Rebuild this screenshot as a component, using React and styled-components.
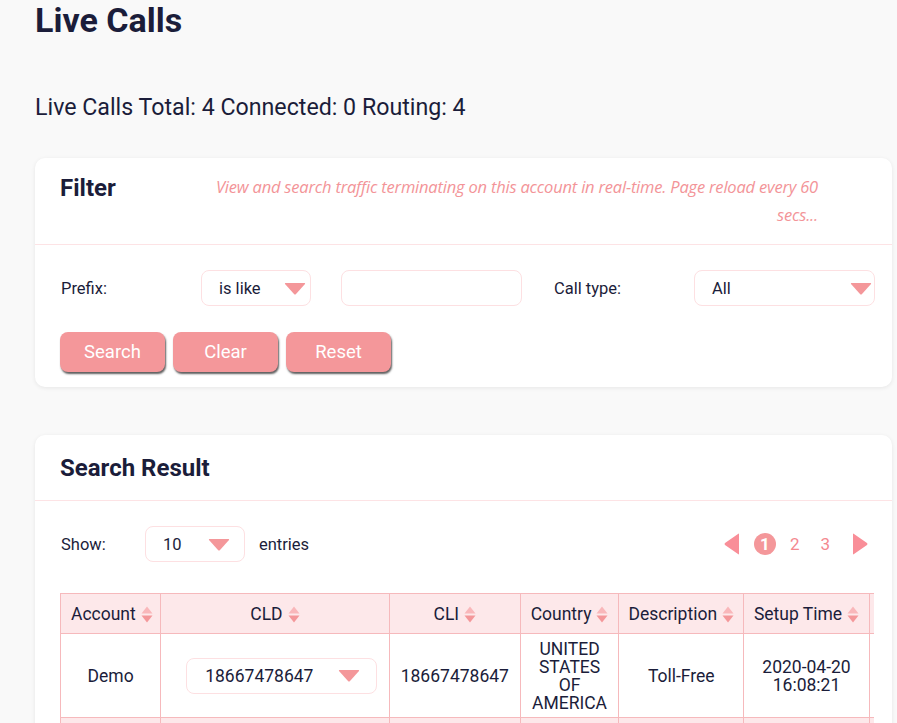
import React from "react";
import styled, { createGlobalStyle } from "styled-components";

const GlobalStyle = createGlobalStyle`
  html, body {
    margin: 0;
    padding: 0;
    background: #f9f9f9;
    font-family: Roboto, "Noto Sans", sans-serif;
    color: #1b1d3a;
    overflow: hidden;
  }
`;

const pink = "#f4979a";
const pinkLight = "#fde0e2";

const Arrow = ({ w = 22, h = 13 }) => (
  <svg width={w} height={h} viewBox="0 0 22 13">
    <path d="M1.5 1 L20.5 1 Q21.5 1 21 2 L12 12 Q11 13 10 12 L1 2 Q0.5 1 1.5 1 Z" fill={pink} />
  </svg>
);

const SortIcon = () => (
  <svg width="12" height="17" viewBox="0 0 12 17">
    <path d="M6 0.5 L11.5 7.5 L0.5 7.5 Z" fill="#f9b7ba" />
    <path d="M6 16.5 L11.5 9.5 L0.5 9.5 Z" fill={pink} />
  </svg>
);

const PageArrow = ({ dir }) => (
  <svg width="16" height="22" viewBox="0 0 16 22">
    {dir === "left" ? (
      <path d="M15 1.5 L15 20.5 Q15 22 14 21 L1 12 Q0 11 1 10 L14 1 Q15 0 15 1.5 Z" fill="#f98e98" />
    ) : (
      <path d="M1 1.5 L1 20.5 Q1 22 2 21 L15 12 Q16 11 15 10 L2 1 Q1 0 1 1.5 Z" fill="#f98e98" />
    )}
  </svg>
);

const Page = styled.div`
  padding: 0 5px 0 35px;
`;

const Title = styled.h1`
  margin: 0;
  padding-top: 1px;
  font-size: 34px;
  font-weight: 700;
  line-height: 38px;
`;

const Stats = styled.div`
  margin-top: 55px;
  font-size: 23.2px;
  line-height: 26px;
`;

const Card = styled.section`
  margin-top: ${(p) => p.$top}px;
  background: #fff;
  border-radius: 10px;
  box-shadow: 0 1px 4px rgba(0, 0, 0, 0.08);
  overflow: hidden;
`;

const CardHeader = styled.div`
  display: flex;
  align-items: flex-start;
  justify-content: space-between;
  padding: ${(p) => p.$pad};
  border-bottom: 1px solid #fde3e5;
`;

const CardTitle = styled.h2`
  margin: 0;
  font-size: 24px;
  font-weight: 700;
  line-height: 30px;
`;

const Note = styled.p`
  margin: 0 56px 0 0;
  width: 615px;
  text-align: right;
  font-family: "Open Sans", sans-serif;
  font-style: italic;
  font-size: 16.5px;
  line-height: 28px;
  color: #f39498;
  letter-spacing: -0.2px;
`;

const FilterBody = styled.div`
  padding: 25px 18px 15px 25px;
`;

const FormRow = styled.div`
  display: grid;
  grid-template-columns: 141px 110px 30px 181px 31px 141px 181px;
  align-items: center;
`;

const Label = styled.span`
  font-size: 16.5px;
  padding-left: 1px;
`;

const Select = styled.div`
  display: flex;
  align-items: center;
  justify-content: space-between;
  box-sizing: border-box;
  width: ${(p) => p.$w}px;
  height: 36px;
  padding: 0 2px 0 17px;
  border: 1px solid ${pinkLight};
  border-radius: 8px;
  font-size: 16.5px;
  background: #fff;
  svg {
    margin-right: ${(p) => p.$arrowGap || 0}px;
  }
`;

const Input = styled.div`
  box-sizing: border-box;
  height: 36px;
  border: 1px solid ${pinkLight};
  border-radius: 8px;
`;

const Buttons = styled.div`
  display: flex;
  gap: 8px;
  margin-top: 26px;
`;

const Button = styled.button`
  width: 105px;
  height: 40px;
  border: none;
  border-radius: 8px;
  background: ${pink};
  color: #fff;
  font-family: Roboto, sans-serif;
  font-size: 18.5px;
  box-shadow: 1px 2px 2px rgba(40, 40, 40, 0.75);
`;

const ResultBody = styled.div`
  padding: 25px 18px 0 25px;
`;

const Toolbar = styled.div`
  display: flex;
  align-items: center;
  justify-content: space-between;
`;

const ShowGroup = styled.div`
  display: flex;
  align-items: center;
  font-size: 16.5px;
  span:first-child {
    width: 84px;
    padding-left: 1px;
  }
  span:last-child {
    margin-left: 14px;
  }
`;

const Pager = styled.div`
  display: flex;
  align-items: center;
  margin-right: 6px;
  font-size: 17px;
  color: #f4898f;
`;

const PageNum = styled.span`
  display: inline-flex;
  align-items: center;
  justify-content: center;
  width: ${(p) => (p.$active ? "22px" : "auto")};
  height: 22px;
  border-radius: 50%;
  background: ${(p) => (p.$active ? pink : "transparent")};
  color: ${(p) => (p.$active ? "#fff" : "#f4898f")};
  font-weight: ${(p) => (p.$active ? 700 : 400)};
  margin: ${(p) => p.$m};
`;

const TableWrap = styled.div`
  margin-top: 31px;
  overflow: hidden;
`;

const Table = styled.table`
  border-collapse: collapse;
  table-layout: fixed;
  width: 950px;
  font-size: 17.5px;
`;

const Th = styled.th`
  height: 39px;
  padding: 0 4px;
  background: #fde8ea;
  border: 1px solid #f6b9bc;
  font-weight: 400;
  font-size: 17.5px;
  white-space: nowrap;
  text-align: ${(p) => (p.$left ? "left" : "center")};
  padding-left: ${(p) => (p.$left ? "10px" : "4px")};
  span {
    display: inline-flex;
    align-items: center;
    gap: 5px;
  }
  svg {
    margin-top: 1px;
  }
`;

const Td = styled.td`
  height: ${(p) => (p.$short ? 40 : 83)}px;
  padding: 0 ${(p) => p.$pad || 4}px;
  border: 1px solid #f6b9bc;
  border-top: none;
  text-align: center;
  line-height: 18px;
  white-space: pre-line;
`;

const Tr = styled.tr`
  background: ${(p) => (p.$alt ? "#fde8ea" : "#fff")};
`;

const CellSelect = styled(Select)`
  margin-left: 21px;
  padding-left: 18px;
  font-size: 17.5px;
`;

const columns = [
  { label: "Account", w: 100, left: true },
  { label: "CLD", w: 228 },
  { label: "CLI", w: 131 },
  { label: "Country", w: 98 },
  { label: "Description", w: 125 },
  { label: "Setup Time", w: 125 },
  { label: "", w: 140 },
];

export default function App() {
  return (
    <Page>
      <GlobalStyle />
      <Title>Live Calls</Title>
      <Stats>Live Calls Total: 4 Connected: 0 Routing: 4</Stats>

      <Card $top={38}>
        <CardHeader $pad="15px 18px 15px 25px">
          <CardTitle>Filter</CardTitle>
          <Note>
            View and search traffic terminating on this account in real-time. Page reload every 60
            secs...
          </Note>
        </CardHeader>
        <FilterBody>
          <FormRow>
            <Label>Prefix:</Label>
            <Select $w={110} $arrowGap={2}>
              is like <Arrow />
            </Select>
            <span />
            <Input />
            <span />
            <Label>Call type:</Label>
            <Select $w={181}>
              All <Arrow />
            </Select>
          </FormRow>
          <Buttons>
            <Button>Search</Button>
            <Button>Clear</Button>
            <Button>Reset</Button>
          </Buttons>
        </FilterBody>
      </Card>

      <Card $top={48}>
        <CardHeader $pad="18px 18px 17px 25px">
          <CardTitle>Search Result</CardTitle>
        </CardHeader>
        <ResultBody>
          <Toolbar>
            <ShowGroup>
              <span>Show:</span>
              <Select $w={100} $arrowGap={12}>
                10 <Arrow />
              </Select>
              <span>entries</span>
            </ShowGroup>
            <Pager>
              <PageArrow dir="left" />
              <PageNum $active $m="0 0 0 14px">1</PageNum>
              <PageNum $m="0 0 0 14px">2</PageNum>
              <PageNum $m="0 0 0 21px">3</PageNum>
              <PageNum $m="0 22px 0 0" />
              <PageArrow dir="right" />
            </Pager>
          </Toolbar>
          <TableWrap>
            <Table>
              <colgroup>
                {columns.map((c, i) => (
                  <col key={i} style={{ width: c.w }} />
                ))}
              </colgroup>
              <thead>
                <tr>
                  {columns.map((c, i) => (
                    <Th key={i} $left={c.left}>
                      {c.label && (
                        <span>
                          {c.label} <SortIcon />
                        </span>
                      )}
                    </Th>
                  ))}
                </tr>
              </thead>
              <tbody>
                <Tr>
                  <Td>Demo</Td>
                  <Td>
                    <CellSelect $w={191} $arrowGap={14}>
                      18667478647 <Arrow />
                    </CellSelect>
                  </Td>
                  <Td>18667478647</Td>
                  <Td $pad={8}>UNITED STATES OF AMERICA</Td>
                  <Td>Toll-Free</Td>
                  <Td>{"2020-04-20\n16:08:21"}</Td>
                  <Td />
                </Tr>
                <Tr $alt>
                  {columns.map((c, i) => (
                    <Td key={i} $short />
                  ))}
                </Tr>
              </tbody>
            </Table>
          </TableWrap>
        </ResultBody>
      </Card>
    </Page>
  );
}
